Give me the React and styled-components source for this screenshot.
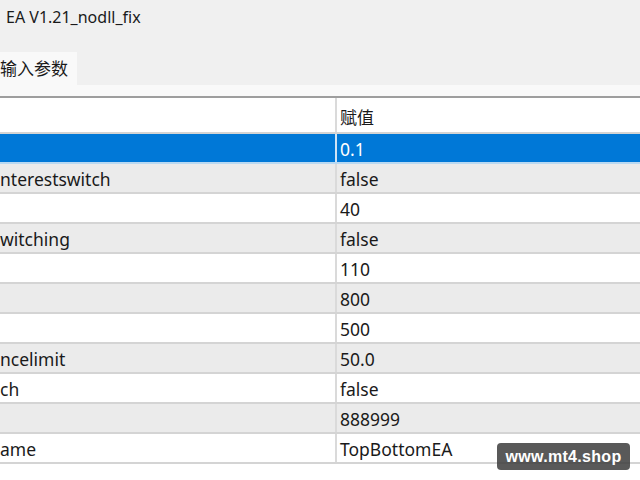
import React from 'react'
import styled, { createGlobalStyle } from 'styled-components'

const GlobalStyle = createGlobalStyle`
  html, body {
    margin: 0;
    padding: 0;
    background: #ffffff;
    overflow: hidden;
  }
  body {
    font-family: "Noto Sans", "Noto Sans CJK SC", sans-serif;
    color: #1a1a1a;
  }
`

const Window = styled.div`
  position: relative;
  width: 640px;
  height: 480px;
  display: flex;
  flex-direction: column;
  background: #ffffff;
`

const TitleBar = styled.div`
  height: 52px;
  background: #f0f0f0;
  padding: 4px 0 0 6px;
  box-sizing: border-box;
  font-size: 16px;
  line-height: 26px;
  color: #1a1a1a;
`

const TabStrip = styled.div`
  height: 46px;
  background: #f0f0f0;
  display: flex;
  flex-direction: column;
  border-bottom: 2px solid #9e9e9e;
  box-sizing: border-box;
`

const Tab = styled.div`
  width: 77px;
  height: 33px;
  background: #f9f9f9;
  font-family: "Noto Sans CJK SC", sans-serif;
  font-size: 17px;
  line-height: 32px;
  color: #1a1a1a;
`

const TabFloor = styled.div`
  flex: 1;
  background: #f9f9f9;
`

const Table = styled.div`
  display: flex;
  flex-direction: column;
`

const Row = styled.div`
  display: grid;
  grid-template-columns: 335px 1fr;
  height: ${(p) => (p.$header ? '36px' : '30px')};
  box-sizing: border-box;
  border-bottom: 2px solid ${(p) => (p.$selected ? '#b9d9f2' : '#d4d4d4')};
  background: ${(p) =>
    p.$selected ? '#0078d7' : p.$header ? '#ffffff' : p.$odd ? '#ebebeb' : '#ffffff'};
  color: ${(p) => (p.$selected ? '#ffffff' : '#1a1a1a')};
`

const Cell = styled.div`
  box-sizing: border-box;
  font-size: ${(p) => (p.$header ? '17px' : '17.5px')};
  padding-top: ${(p) => (p.$header ? '3px' : '3px')};
  line-height: ${(p) => (p.$header ? '31px' : '25px')};
  padding-left: ${(p) => (p.$value ? '3px' : '0')};
  white-space: nowrap;
  overflow: hidden;
  border-left: ${(p) => (p.$value ? `2px solid ${p.$selected ? '#cfe3f5' : '#dadada'}` : 'none')};
  font-family: ${(p) =>
    p.$header ? '"Noto Sans CJK SC", sans-serif' : '"Noto Sans", "Noto Sans CJK SC", sans-serif'};
`

const Watermark = styled.div`
  position: absolute;
  left: 497px;
  top: 443px;
  width: 133px;
  height: 27px;
  border-radius: 4px;
  background: rgba(60, 60, 60, 0.85);
  color: #ffffff;
  font-family: "Liberation Sans", Arial, sans-serif;
  font-weight: bold;
  font-size: 16px;
  line-height: 27px;
  text-align: center;
  letter-spacing: 0.3px;
`

const rows = [
  { name: '', value: '0.1', selected: true },
  { name: 'nterestswitch', value: 'false' },
  { name: '', value: '40' },
  { name: 'witching', value: 'false' },
  { name: '', value: '110' },
  { name: '', value: '800' },
  { name: '', value: '500' },
  { name: 'ncelimit', value: '50.0' },
  { name: 'ch', value: 'false' },
  { name: '', value: '888999' },
  { name: 'ame', value: 'TopBottomEA' },
]

const App = () => {
  return (
    <>
      <GlobalStyle />
      <Window>
        <TitleBar>EA V1.21_nodll_fix</TitleBar>
        <TabStrip>
          <Tab>输入参数</Tab>
          <TabFloor />
        </TabStrip>
        <Table>
          <Row $header>
            <Cell $header />
            <Cell $header $value>
              赋值
            </Cell>
          </Row>
          {rows.map((r, i) => (
            <Row key={i} $selected={r.selected} $odd={i % 2 === 1}>
              <Cell>{r.name}</Cell>
              <Cell $value $selected={r.selected}>
                {r.value}
              </Cell>
            </Row>
          ))}
        </Table>
        <Watermark>www.mt4.shop</Watermark>
      </Window>
    </>
  )
}

export default App
